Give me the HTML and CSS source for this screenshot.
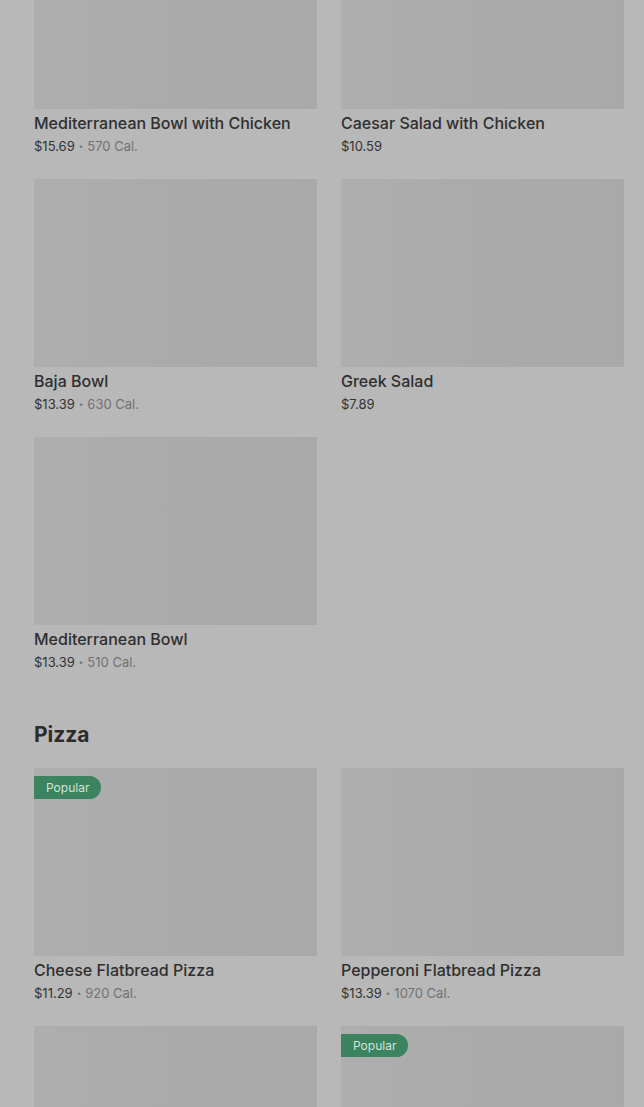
FILE: index.html
```html
<!DOCTYPE html>
<html lang="en">
<head>
  <meta charset="UTF-8">
  <meta name="viewport" content="width=device-width, initial-scale=1">
  <title>Menu</title>
  <link rel="stylesheet" href="styles.css">
</head>
<body>

  <div class="menu">
    <!-- Bowls & Salads (scrolled part) -->
    <section class="menu-section">
      <div class="item-grid">
        <div class="item">
          <div class="item-photo"></div>
          <h3 class="item-name">Mediterranean Bowl with Chicken</h3>
          <p class="item-meta"><span>$15.69</span><span class="dot">•</span><span class="cal">570 Cal.</span></p>
        </div>
        <div class="item">
          <div class="item-photo"></div>
          <h3 class="item-name">Caesar Salad with Chicken</h3>
          <p class="item-meta"><span>$10.59</span></p>
        </div>
        <div class="item">
          <div class="item-photo"></div>
          <h3 class="item-name">Baja Bowl</h3>
          <p class="item-meta"><span>$13.39</span><span class="dot">•</span><span class="cal">630 Cal.</span></p>
        </div>
        <div class="item">
          <div class="item-photo"></div>
          <h3 class="item-name">Greek Salad</h3>
          <p class="item-meta"><span>$7.89</span></p>
        </div>
        <div class="item">
          <div class="item-photo"></div>
          <h3 class="item-name">Mediterranean Bowl</h3>
          <p class="item-meta"><span>$13.39</span><span class="dot">•</span><span class="cal">510 Cal.</span></p>
        </div>
      </div>
    </section>

    <!-- Pizza -->
    <section class="menu-section">
      <h2 class="section-title">Pizza</h2>
      <div class="item-grid">
        <div class="item">
          <div class="item-photo">
            <span class="badge">Popular</span>
          </div>
          <h3 class="item-name">Cheese Flatbread Pizza</h3>
          <p class="item-meta"><span>$11.29</span><span class="dot">•</span><span class="cal">920 Cal.</span></p>
        </div>
        <div class="item">
          <div class="item-photo"></div>
          <h3 class="item-name">Pepperoni Flatbread Pizza</h3>
          <p class="item-meta"><span>$13.39</span><span class="dot">•</span><span class="cal">1070 Cal.</span></p>
        </div>
        <!-- next row, only the photos are in view -->
        <div class="item">
          <div class="item-photo"></div>
        </div>
        <div class="item">
          <div class="item-photo">
            <span class="badge">Popular</span>
          </div>
        </div>
      </div>
    </section>
  </div>

</body>
</html>
```

FILE: styles.css
```css
/* Basic Reset */
* {
  box-sizing: border-box;
  margin: 0;
  padding: 0;
}

body {
  font-family: Inter, "Noto Sans", Arial, sans-serif;
  background-color: #b8b8b8;
  color: #2e2e2e;
  overflow: hidden;
  height: 1107px;
}

/* page is scrolled, first row of photos is partly off screen */
.menu {
  margin-top: -79px;
  padding: 0 20px 0 34px;
}

.menu-section + .menu-section {
  margin-top: 46px;
}

.section-title {
  font-size: 21px;
  line-height: 32px;
  font-weight: 700;
  color: #2c2c2c;
  margin-bottom: 17px;
}

.item-grid {
  display: grid;
  grid-template-columns: 1fr 1fr;
  column-gap: 24px;
  row-gap: 22px;
}

.item-photo {
  position: relative;
  height: 188px;
  background-color: #ababab;
  background-image: linear-gradient(90deg, #aeaeae 0%, #ababab 40%, #a9a9a9 100%);
}

.badge {
  position: absolute;
  top: 8px;
  left: 0;
  height: 23px;
  padding: 0 12px;
  background-color: #3c8360;
  color: #d3e3d9;
  font-size: 12px;
  line-height: 23px;
  border-radius: 0 12px 12px 0;
}

.item-name {
  margin-top: 2px;
  font-size: 16px;
  line-height: 24px;
  font-weight: 500;
  color: #2f2f2f;
  white-space: nowrap;
}

.item-meta {
  display: flex;
  align-items: center;
  gap: 4px;
  height: 22px;
  font-size: 13px;
  line-height: 22px;
  color: #333;
}

.item-meta .dot {
  font-size: 8px;
  color: #777;
}

.item-meta .cal {
  color: #727272;
}
```
